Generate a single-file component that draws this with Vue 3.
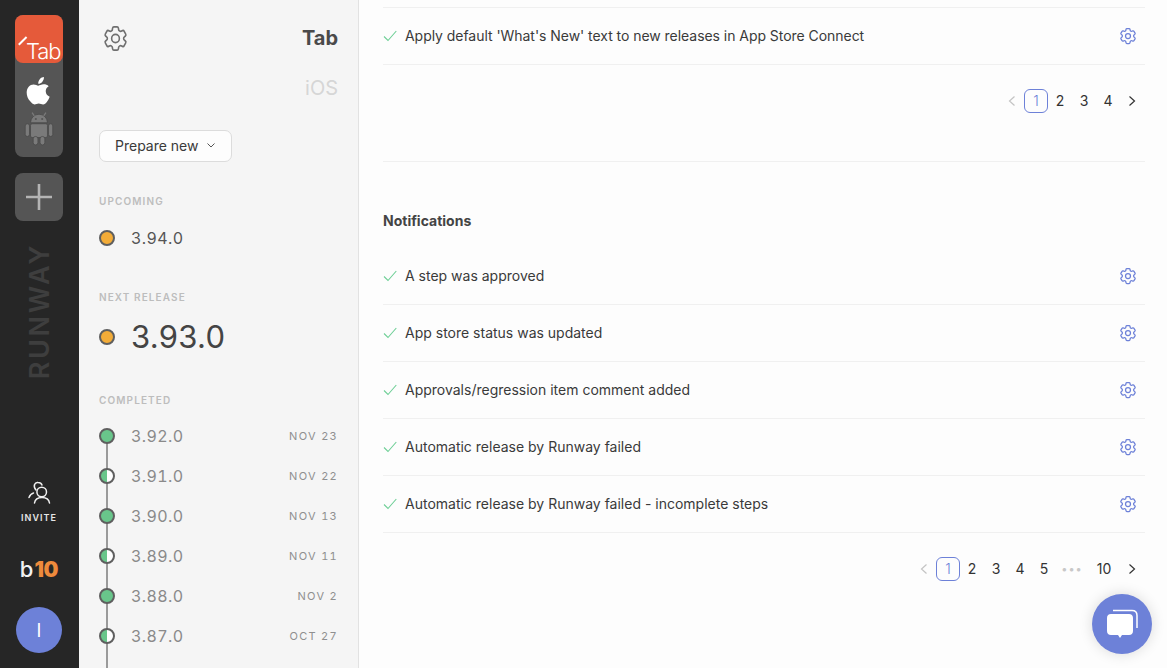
<script setup>
const top = ["Apply default 'What's New' text to new releases in App Store Connect"]
const notes = ['A step was approved','App store status was updated','Approvals/regression item comment added','Automatic release by Runway failed','Automatic release by Runway failed - incomplete steps']
const done = [
  {v:'3.92.0',d:'NOV 23',full:true},{v:'3.91.0',d:'NOV 22'},{v:'3.90.0',d:'NOV 13',full:true},
  {v:'3.89.0',d:'NOV 11'},{v:'3.88.0',d:'NOV 2',full:true},{v:'3.87.0',d:'OCT 27'}]
const gear = 'M9.594 3.94c.09-.542.56-.94 1.11-.94h2.593c.55 0 1.02.398 1.11.94l.213 1.281c.063.374.313.686.645.87.074.04.147.083.22.127.324.196.72.257 1.075.124l1.217-.456a1.125 1.125 0 011.37.49l1.296 2.247a1.125 1.125 0 01-.26 1.431l-1.003.827c-.293.24-.438.613-.431.992a6.759 6.759 0 010 .255c-.007.378.138.75.43.99l1.005.828c.424.35.534.954.26 1.43l-1.298 2.247a1.125 1.125 0 01-1.369.491l-1.217-.456c-.355-.133-.75-.072-1.076.124a6.57 6.57 0 01-.22.128c-.331.183-.581.495-.644.869l-.213 1.28c-.09.543-.56.941-1.11.941h-2.594c-.55 0-1.02-.398-1.11-.94l-.213-1.281c-.062-.374-.312-.686-.644-.87a6.52 6.52 0 01-.22-.127c-.325-.196-.72-.257-1.076-.124l-1.217.456a1.125 1.125 0 01-1.369-.49l-1.297-2.247a1.125 1.125 0 01.26-1.431l1.004-.827c.292-.24.437-.613.43-.992a6.932 6.932 0 010-.255c.007-.378-.138-.75-.43-.99l-1.004-.828a1.125 1.125 0 01-.26-1.43l1.297-2.247a1.125 1.125 0 011.37-.491l1.216.456c.356.133.751.072 1.076-.124.072-.044.146-.087.22-.128.332-.183.582-.495.644-.869l.214-1.281z'
</script>

<template>
  <div class="app">
    <nav class="rail">
      <div class="group">
        <div class="logo"><i class="slash"></i><span>Tab</span></div>
        <svg class="apple" width="28" height="30" viewBox="0 0 26 28"><path fill="#fff" d="M17.600 1c.1 2-.6 3.400-1.600 4.500-1 1.100-2.300 1.800-3.700 1.700-.2-1.800.6-3.400 1.600-4.500C14.900 1.700 16.400 1 17.600 1zM22 9.500c-2.300 1.500-2.800 3.300-2.700 4.900.1 2.300 1.500 3.900 3.700 4.900-.7 1.900-1.500 3.500-2.700 5-1 1.300-2.100 2.200-3.500 2.200s-2.400-.9-4-.9-2.700.9-4 .9c-1.500 0-2.700-1.100-3.800-2.600C2.500 21.500 1.500 18.300 1.500 15.500c0-4.500 2.900-7.600 6.500-7.600 1.800 0 3.200 1.100 4.400 1.100 1.100 0 2.800-1.200 4.900-1.200 1.900 0 3.600.6 4.700 1.700z"/></svg>
        <svg class="android" width="32" height="36" viewBox="0 0 30 34"><g fill="#7a7a7a" stroke="#484848" stroke-width=".7"><path d="M7 12a8 8 0 0 1 16 0z"/><rect x="7" y="13" width="16" height="13" rx="1.500"/><rect x="2" y="13" width="4" height="12" rx="2"/><rect x="24" y="13" width="4" height="12" rx="2"/><rect x="9.500" y="25" width="4.500" height="8" rx="2.200"/><rect x="16" y="25" width="4.500" height="8" rx="2.200"/></g><path d="M10.500 5.500 8.500 2.500M19.500 5.500 21.500 2.500" stroke="#7a7a7a" stroke-width="1.200"/><circle cx="12" cy="8.500" r="1" fill="#555"/><circle cx="18" cy="8.500" r="1" fill="#555"/></svg>
      </div>
      <div class="add"><svg width="26" height="26" viewBox="0 0 26 26"><path d="M13 0v26M0 13h26" stroke="#b4b4b4" stroke-width="2.600"/></svg></div>
      <div class="brand-wrap"><span class="brand">RUNWAY</span></div>
      <svg class="invite-icon" width="26" height="26" viewBox="0 0 26 26" fill="none" stroke="#f0f0f0" stroke-width="1.500" stroke-linecap="round"><circle cx="15.700" cy="13" r="4.800"/><path d="M8.500 24c.5-3.500 3-5.500 7.500-5.500s7 2 7.500 5.500M10 11C6.500 7 9 3 12 3.500c2 0 3.500 1 4 2.500M3 18.500C4 16 5.500 14.500 7.500 14"/></svg>
      <div class="invite">INVITE</div>
      <div class="b10"><span class="b">b</span><span class="ten">10</span></div>
      <div class="avatar">I</div>
    </nav>

    <aside class="side">
      <div class="head">
        <svg class="hgear" width="29" height="31" viewBox="0 0 24 24" preserveAspectRatio="none" fill="none" stroke="#6f6f6f" stroke-width="1.300" stroke-linejoin="round"><path :d="gear"/><circle cx="12" cy="12" r="3.200"/></svg>
        <div class="titles"><div class="t1">Tab</div><div class="t2">iOS</div></div>
      </div>
      <button class="prep">Prepare new <svg width="8" height="5" viewBox="0 0 8 5" fill="none" stroke="#555"><path d="M.5.500 4 4 7.500.500"/></svg></button>
      <div class="label up">UPCOMING</div>
      <div class="rel small"><i class="dot amber"></i><span class="v dark">3.94.0</span></div>
      <div class="label next">NEXT RELEASE</div>
      <div class="rel big"><i class="dot amber"></i><span class="v">3.93.0</span></div>
      <div class="label comp">COMPLETED</div>
      <div class="list">
        <div v-for="r in done" :key="r.v" class="rel item">
          <i class="dot" :class="r.full ? 'green' : 'half'"></i>
          <span class="v">{{ r.v }}</span>
          <span class="date">{{ r.d }}</span>
        </div>
        <div class="tail"></div>
      </div>
    </aside>

    <main class="main">
      <div class="rows first">
        <div v-for="t in top" :key="t" class="row">
          <svg class="chk" width="14" height="12" viewBox="0 0 14 12" fill="none" stroke="#6fcf97" stroke-width="1.100"><path d="M1 6.500 5 10.500 13.300 1"/></svg>
          <span class="txt tight">{{ t }}</span>
          <svg class="cog" width="20" height="20" viewBox="0 0 24 24" fill="none" stroke="#6d81d8" stroke-width="1.500" stroke-linejoin="round"><path :d="gear"/><circle cx="12" cy="12" r="3"/></svg>
        </div>
      </div>
      <div class="pager">
        <svg class="arr" width="8" height="10" viewBox="0 0 8 10" fill="none" stroke="#c4c4c4" stroke-width="1.200"><path d="M6.500.5 1.500 5l5 4.500"/></svg>
        <span class="pg on">1</span><span class="pg">2</span><span class="pg">3</span><span class="pg">4</span>
        <svg class="arr" width="8" height="10" viewBox="0 0 8 10" fill="none" stroke="#333" stroke-width="1.200"><path d="M1.500.5 6.500 5l-5 4.500"/></svg>
      </div>
      <div class="divider"></div>
      <h3 class="sec">Notifications</h3>
      <div class="rows">
        <div v-for="t in notes" :key="t" class="row">
          <svg class="chk" width="14" height="12" viewBox="0 0 14 12" fill="none" stroke="#6fcf97" stroke-width="1.100"><path d="M1 6.500 5 10.500 13.300 1"/></svg>
          <span class="txt">{{ t }}</span>
          <svg class="cog" width="20" height="20" viewBox="0 0 24 24" fill="none" stroke="#6d81d8" stroke-width="1.500" stroke-linejoin="round"><path :d="gear"/><circle cx="12" cy="12" r="3"/></svg>
        </div>
      </div>
      <div class="pager">
        <svg class="arr" width="8" height="10" viewBox="0 0 8 10" fill="none" stroke="#c4c4c4" stroke-width="1.200"><path d="M6.500.5 1.500 5l5 4.500"/></svg>
        <span class="pg on">1</span><span class="pg">2</span><span class="pg">3</span><span class="pg">4</span><span class="pg">5</span>
        <span class="pg dots">•••</span><span class="pg wide">10</span>
        <svg class="arr" width="8" height="10" viewBox="0 0 8 10" fill="none" stroke="#333" stroke-width="1.200"><path d="M1.500.5 6.500 5l-5 4.500"/></svg>
      </div>
    </main>

    <div class="chat">
      <svg width="34" height="34" viewBox="0 0 34 34"><path d="M8 3.500h19c3.500 0 5 2 5 5V21" fill="none" stroke="#fff" stroke-width="1.500"/><path fill="#fff" d="M6 7h18c2.500 0 4 1.500 4 4v13c0 2.500-1.500 4-4 4h-7l-2 3-2-3H6c-2.500 0-4-1.500-4-4V11c0-2.500 1.500-4 4-4z"/></svg>
    </div>
  </div>
</template>

<style scoped>
.app { display: flex; width: 1167px; height: 668px; overflow: hidden; position: relative; font-family: Inter, "Liberation Sans", sans-serif; background: #fdfdfd; color: #333; }
.rail { width: 79px; flex: none; background: #262626; display: flex; flex-direction: column; align-items: center; padding: 15px 1px 0 0; box-sizing: border-box; }
.group { width: 48px; height: 142px; background: #555; border-radius: 8px; display: flex; flex-direction: column; align-items: center; }
.logo { width: 48px; height: 48px; flex: none; background: #e55a3a; border-radius: 8px; position: relative; color: #fff; }
.logo span { position: absolute; left: 11px; top: 24px; font-size: 22px; line-height: 24px; font-weight: 300; letter-spacing: -1.100px; }
.slash { position: absolute; left: 2px; top: 25px; width: 11px; height: 1.500px; background: #fff; transform: rotate(-45deg); }
.apple { margin-top: 13px; }
.android { margin-top: 4px; }
.add { width: 48px; height: 48px; margin-top: 16px; background: #555; border-radius: 8px; display: flex; align-items: center; justify-content: center; }
.brand-wrap { height: 134px; margin-top: 23px; display: flex; align-items: center; justify-content: center; }
.brand { writing-mode: vertical-rl; transform: rotate(180deg); font-size: 27px; font-weight: 600; letter-spacing: 2.600px; color: #3e3e3e; }
.invite-icon { margin-top: 101px; }
.invite { color: #e6e6e6; font-size: 9px; font-weight: 600; letter-spacing: 1px; margin-top: 7px; line-height: 12px; }
.b10 { margin-top: 33px; height: 24px; line-height: 24px; display: flex; align-items: baseline; }
.b { color: #f2f2f2; font-weight: 500; font-size: 22px; margin-right: 1px; }
.ten { color: #ee8a3c; font-weight: 900; font-size: 21px; letter-spacing: -.3px; }
.avatar { width: 46px; height: 46px; margin-top: 26px; flex: none; border-radius: 50%; background: #6d81d8; color: #fff; display: flex; align-items: center; justify-content: center; font-size: 18px; font-weight: 400; }

.side { width: 280px; flex: none; box-sizing: border-box; background: #f5f5f5; border-right: 1px solid #e2e2e2; padding: 26px 20px 0; overflow: hidden; }
.head { display: flex; justify-content: space-between; align-items: flex-start; }
.hgear { margin: -3px 0 0 2px; }
.titles { text-align: right; }
.t1 { font-size: 20px; font-weight: 700; color: #4a4a4a; line-height: 25px; }
.t2 { font-size: 20px; font-weight: 400; color: #d6d6d6; line-height: 26px; margin-top: 24px; }
.prep { display: flex; align-items: center; gap: 8px; margin-top: 29px; width: 133px; height: 32px; box-sizing: border-box; padding: 0 15px 2px; background: #fdfdfd; border: 1px solid #dcdcdc; border-radius: 7px; font: 400 14px Inter, sans-serif; color: #3a3a3a; white-space: nowrap; }
.label { font-size: 10px; font-weight: 600; letter-spacing: 1.100px; color: #bdbdbd; line-height: 12px; }
.up { margin-top: 33px; }
.next { margin-top: 33px; }
.comp { margin-top: 37px; }
.rel { display: flex; align-items: center; }
.small { height: 40px; margin-top: 11px; }
.big { height: 40px; margin-top: 14px; }
.dot { width: 16px; height: 16px; box-sizing: border-box; border-radius: 50%; border: 2px solid #5f5f5f; flex: none; margin-right: 16px; position: relative; z-index: 1; }
.amber { background: #f3ac38; }
.green { background: #69c68b; }
.half { background: linear-gradient(90deg, #69c68b 50%, #fff 50%); }
.v { font-size: 16px; font-weight: 400; color: #8a8a8a; letter-spacing: .4px; font-variant-numeric: tabular-nums; }
.dark { color: #555; }
.big .v { font-size: 31px; color: #444; letter-spacing: .3px; font-variant-numeric: normal; padding-bottom: 2px; }
.list { margin-top: 10px; position: relative; }
.list::before { content: ''; position: absolute; left: 7px; top: 20px; bottom: 0; width: 2px; background: #9a9a9a; }
.item { height: 40px; }
.date { margin-left: auto; font-size: 11px; letter-spacing: 1.300px; color: #8f8f8f; font-variant-numeric: tabular-nums; }
.tail { height: 20px; }

.main { flex: 1; min-width: 0; padding: 7px 22px 0 24px; box-sizing: border-box; }
.rows { border-top: 1px solid #f0f0f0; }
.row { display: flex; align-items: center; height: 57px; box-sizing: border-box; border-bottom: 1px solid #f0f0f0; }
.rows:not(.first) { border-top: none; }
.chk { flex: none; margin-right: 8px; }
.txt { font-size: 14px; color: #3a3a3a; flex: 1; margin-bottom: 2px; }
.tight { letter-spacing: -.045px; }
.cog { margin-right: 7px; }
.pager { display: flex; align-items: center; justify-content: flex-end; font-size: 14px; color: #333; height: 24px; margin-top: 24px; padding-right: 1px; }
.arr { margin: 0 8px; }
.pg { width: 24px; height: 24px; text-align: center; line-height: 24px; box-sizing: border-box; }
.on { border: 1px solid #6d81d8; border-radius: 6px; color: #6d81d8; font-weight: 300; line-height: 22px; }
.dots { color: #c8c8c8; font-size: 11px; letter-spacing: 1px; width: 32px; }
.wide { width: 32px; }
.divider { height: 1px; background: #f0f0f0; margin-top: 48px; }
.sec { margin: 50px 0 18px; font-size: 14px; font-weight: 700; color: #444; line-height: 18px; }
.chat { position: absolute; left: 1092px; top: 594px; width: 60px; height: 60px; border-radius: 50%; background: #6d81d8; box-shadow: 0 0 14px rgba(0,0,0,.14); display: flex; align-items: center; justify-content: center; }
</style>
